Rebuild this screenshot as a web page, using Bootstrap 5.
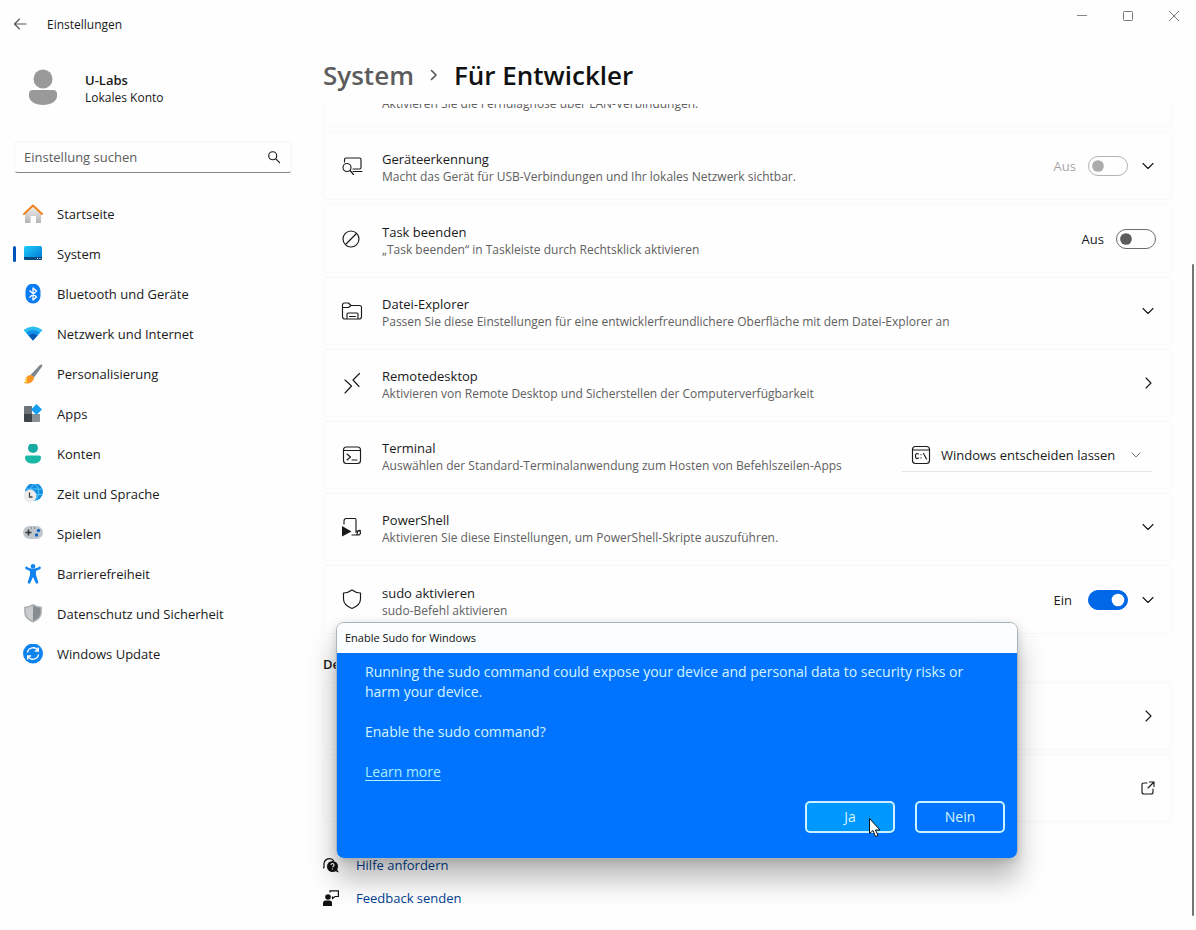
<!DOCTYPE html>
<html lang="de">
<head>
<meta charset="utf-8">
<meta name="viewport" content="width=device-width, initial-scale=1">
<title>Einstellungen</title>
<link href="https://cdn.jsdelivr.net/npm/bootstrap@5.3.0/dist/css/bootstrap.min.css" rel="stylesheet">
<style>
  body { font-family: "Open Sans", "Noto Sans", sans-serif; font-size: 13px; line-height: 20px; color: #1a1a1a; background: #fefefe; }
  svg { display: block; flex: none; }
  .line { fill: none; stroke: #1a1a1a; stroke-width: 1.15; stroke-linejoin: round; stroke-linecap: round; }
  .window { min-height: 100vh; }
  .titlebar { height: 48px; padding-left: 13px; }
  .titlebar button, .row-action { background: none; border: 0; padding: 0; color: inherit; }
  .app-name { font-size: 12px; padding: 2px 0 0 2px; }
  .caption-buttons { gap: 36px; padding: 0 17px 16px 0; }
  .sidebar { width: 306px; padding: 0 14px; }
  .account { height: 76px; margin-top: 2px; padding-left: 14px; gap: 26px; }
  .account-text { line-height: 18px; font-size: 12px; padding-top: 2px; }
  .account-name { font-size: 13px; }
  .search { margin-top: 15px; height: 32px; padding: 0 10px 0 9px; border: 1px solid #f6f6f6; border-bottom-color: #868686; border-radius: 4px; }
  .search input { border: 0; outline: 0; background: none; min-width: 0; padding: 0; }
  .search input::placeholder { color: #5c5c5c; opacity: 1; }
  .side-list { margin-top: 23px; gap: 4px; }
  .side-list a { height: 36px; padding: 0 9px; gap: 14px; color: #1a1a1a; text-decoration: none; border-radius: 4px; }
  .side-list a.active::before { content: ""; width: 3px; height: 16px; margin: 0 -4px 0 -10px; border-radius: 2px; background: #0052b8; }
  .side-list a.active { gap: 11px; }
  .side-list a.active svg { margin-right: 3px; }
  .content { padding: 0 24px 16px 17px; }
  .crumbs { height: 56px; gap: 15px; padding-bottom: 2px; font-size: 26px; line-height: 36px; font-weight: 600; margin: 0; color: #111; }
  .crumbs a { color: #5c5c5c; text-decoration: none; }
  .settings { gap: 4px; }
  .setting { min-height: 68px; padding: 0 15px 0 16px; border: 1px solid #f8f8f8; border-radius: 4px; background: #fefefe; }
  .setting.has-switch { min-height: 69px; }
  .setting.scrolled { min-height: 0; height: 23px; overflow: hidden; border-top: 0; padding: 0 16px 14px 58px; }
  .setting > svg { margin-right: 18px; }
  .setting-text { padding-top: 3px; }
  .setting-title { line-height: 18px; }
  .setting-note { font-size: 12px; line-height: 17px; color: #606060; }
  .row-action { margin: 0 1px 0 13px; }
  .toggle { gap: 12px; }
  .toggle .form-check-input { width: 40px; height: 20px; margin: 0; border-color: #6b6b6b; box-shadow: none; background-color: transparent;
    background-image: url("data:image/svg+xml,%3Csvg xmlns='http://www.w3.org/2000/svg' viewBox='0 0 20 20'%3E%3Ccircle cx='10' cy='10' r='6.5' fill='%235c5c5c'/%3E%3C/svg%3E"); }
  .toggle .form-check-input:checked { background-color: #0067e6; border-color: #0067e6;
    background-image: url("data:image/svg+xml,%3Csvg xmlns='http://www.w3.org/2000/svg' viewBox='0 0 20 20'%3E%3Ccircle cx='10' cy='10' r='7' fill='white'/%3E%3C/svg%3E"); }
  .terminal-pick { width: 250px; height: 34px; display: grid; grid-template-columns: 38px 1fr 32px; align-items: center; border-bottom: 1px solid #e4e4e4; margin-right: 4px; }
  .terminal-pick select { grid-area: 1 / 1 / 2 / 4; width: 100%; height: 32px; border: 0; background: none; appearance: none; padding: 0 30px 0 39px; color: #1a1a1a; }
  .terminal-pick svg { grid-row: 1; justify-self: center; pointer-events: none; }
  .pick-icon { grid-column: 1; }
  .pick-arrow { grid-column: 3; }
  .group-title { font-size: 13px; font-weight: 600; line-height: 20px; margin: 20px 0 8px; }
  .help-links { gap: 13px; margin-top: 33px; }
  .help-links a { gap: 17px; color: #003e92; text-decoration: none; }
  .scroll-thumb { position: absolute; top: 264px; bottom: 14px; right: 2px; width: 2px; border-radius: 1px; background: #757575; }
  .sudo-dialog { position: absolute; left: 336px; top: 622px; width: 682px; border: 1px solid #a9b3ba; border-radius: 8px; overflow: hidden; box-shadow: 0 20px 28px rgba(0,0,0,.28), 0 2px 8px rgba(0,0,0,.14); }
  .sudo-title { height: 30px; line-height: 30px; padding-left: 8px; font-size: 11px; font-weight: 400; margin: 0; background: #fafefe; color: #111; }
  .sudo-body { background: #0074ff; color: #d5f5ff; font-size: 14px; padding: 9px 12px 25px 28px; }
  .sudo-body p { margin: 0 28px 20px 0; }
  .sudo-body a { color: #a9eeff; text-underline-offset: 3px; }
  .sudo-buttons { gap: 20px; margin-top: 19px; }
  .sudo-buttons .btn { width: 90px; height: 32px; padding: 0; border: 2px solid #c8f2ff; border-radius: 5px; color: #d5f5ff; font-size: 14px; line-height: 20px; }
  .sudo-buttons .hovered { background: #0097ff; }
  .pointer { position: absolute; left: 868px; top: 817px; z-index: 5; }
</style>
</head>
<body>
<div class="window position-relative d-flex flex-column">
  <header class="titlebar d-flex align-items-center justify-content-between">
    <div class="d-flex align-items-center gap-3">
      <button type="button" aria-label="Zurück"><svg width="16" height="16" viewBox="0 0 16 16"><path class="line" style="stroke:#555" d="M13 8H1.500M6.500 3 1.500 8l5 5"/></svg></button>
      <span class="app-name">Einstellungen</span>
    </div>
    <div class="caption-buttons d-flex align-items-center">
      <button type="button" aria-label="Minimieren"><svg width="10" height="10" viewBox="0 0 10 10"><path d="M0 4.500h10" stroke="#888" fill="none"/></svg></button>
      <button type="button" aria-label="Maximieren"><svg width="10" height="10" viewBox="0 0 10 10"><rect x=".5" y=".5" width="9" height="9" rx="1" stroke="#777" fill="none"/></svg></button>
      <button type="button" aria-label="Schließen"><svg width="10" height="10" viewBox="0 0 10 10"><path d="m0 0 10 10M10 0 0 10" stroke="#777" fill="none"/></svg></button>
    </div>
  </header>

  <div class="d-flex flex-grow-1">
    <aside class="sidebar flex-shrink-0">
      <div class="account d-flex align-items-center">
        <svg width="31" height="38" viewBox="0 0 31 38"><g fill="#999"><circle cx="15" cy="10" r="9.500"/><path d="M1 25q0-4 4-4h20q4 0 4 4v2c0 5-6 9-14 9S1 32 1 27z"/></g></svg>
        <div class="account-text"><div class="account-name fw-semibold">U-Labs</div><div>Lokales Konto</div></div>
      </div>
      <div class="search d-flex align-items-center">
        <input class="flex-grow-1" type="text" placeholder="Einstellung suchen" aria-label="Einstellung suchen">
        <svg width="14" height="14" viewBox="0 0 14 14"><path class="line" d="M9.700 5.700a4 4 0 1 1-8 0 4 4 0 0 1 8 0zM8.600 8.600 12.600 12.600"/></svg>
      </div>
      <nav class="side-list d-flex flex-column" aria-label="Einstellungen">
        <a href="#" class="d-flex align-items-center">
          <svg width="20" height="20" viewBox="0 0 20 20"><defs><linearGradient id="gh" x2="0" y2="1"><stop stop-color="#f3f3f3"/><stop offset="1" stop-color="#b4b4b4"/></linearGradient></defs><path fill="url(#gh)" d="M2 9 10 2l8 7v9.500q0 .5-.5.5H13v-7H7.500v7H2.500q-.5 0-.5-.5z"/><path d="m1 10 9-8.500 9 8.500" fill="none" stroke="#f1841b" stroke-width="2" stroke-linejoin="round" stroke-linecap="round"/></svg>Startseite</a>
        <a href="#" class="active d-flex align-items-center" aria-current="page">
          <svg width="20" height="20" viewBox="0 0 20 20"><defs><linearGradient id="gs" x2="1" y2="1"><stop stop-color="#1fd0fa"/><stop offset="1" stop-color="#0071d4"/></linearGradient></defs><rect x="1" y="2" width="18" height="14" rx="1.500" fill="url(#gs)"/><path fill="#0b4a7c" d="M1 13h18v1.500q0 1.500-1.500 1.500h-15Q1 16 1 14.500z"/><path stroke="#fff" d="M14 14.500h1M16.500 14.500h1"/></svg>System</a>
        <a href="#" class="d-flex align-items-center">
          <svg width="20" height="20" viewBox="0 0 20 20"><rect x="2.500" y="-.5" width="15" height="20" rx="7.500" fill="#0a7cf5"/><path d="m6.500 6.500 7 6.500-3.500 3V4l3.500 3-7 6.500" fill="none" stroke="#fff" stroke-width="1.300" stroke-linejoin="round"/></svg>Bluetooth und Geräte</a>
        <a href="#" class="d-flex align-items-center">
          <svg width="20" height="20" viewBox="0 0 20 20"><path fill="#29bdf2" d="M.5 6Q10-1 19.500 6L10 16.500z"/><path fill="#0f91ea" d="M3 8.500q7-5 14 0l-7 8z"/><path fill="#0559b7" d="M5.500 11.500q4.500-3.500 9 0l-4.500 5z"/></svg>Netzwerk und Internet</a>
        <a href="#" class="d-flex align-items-center">
          <svg width="20" height="20" viewBox="0 0 20 20"><path fill="#7d868d" d="M18.500.5q1.500 0 .5 2L11 13.500 7.500 11 16.500 1.500q1-1 2-1z"/><path fill="#f7931e" d="M7.500 11q3.500.5 3.500 3.500c-1 4-6 6-10 4.500 2-1 1-3 2-5.500q1.500-2.500 4.500-2.500z"/><path fill="#ffd04a" d="M5 13q-2 3 0 5-2 .8-4 .5c2-1 1-3 2-4.500z"/></svg>Personalisierung</a>
        <a href="#" class="d-flex align-items-center">
          <svg width="20" height="20" viewBox="0 0 20 20"><path fill="#6d7479" d="M1 3q0-1 1-1h7v8H1z"/><path fill="#3e454a" d="M1 10h8v8H2q-1 0-1-1z"/><path fill="#899197" d="M9 10h8v7q0 1-1 1H9z"/><path fill="#159ef3" d="M13.500 0 19 5.500 13.500 11 8 5.500z"/></svg>Apps</a>
        <a href="#" class="d-flex align-items-center">
          <svg width="20" height="20" viewBox="0 0 20 20"><circle cx="10" cy="4" r="5" fill="#16aaa0"/><path fill="#19b8a6" d="M2 13.500q0-2 2-2h12q2 0 2 2c0 4-3.500 6-8 6s-8-2-8-6z"/></svg>Konten</a>
        <a href="#" class="d-flex align-items-center">
          <svg width="20" height="20" viewBox="0 0 20 20"><circle cx="11" cy="8" r="9" fill="#148fe0"/><path d="M3 5h16M3 10.500h16M11 0c-5 5-5 11 0 17M12 0c5 5 5 11 0 17" fill="none" stroke="#5fd0ff" stroke-width=".8"/><circle cx="7" cy="12" r="6.500" fill="#ececec"/><path d="M6.500 8.500v4.500h3" fill="none" stroke="#444" stroke-width="1.300"/></svg>Zeit und Sprache</a>
        <a href="#" class="d-flex align-items-center">
          <svg width="20" height="20" viewBox="0 0 20 20"><rect y="2" width="20" height="13" rx="6.500" fill="#bfc5cc"/><path d="M5.500 5.500v6M2.500 8.500h6" stroke="#333" stroke-width="1.500"/><g fill="#1766bd"><circle cx="15.500" cy="6.500" r="1.700"/><circle cx="13.500" cy="11" r="1.700"/></g><path stroke="#555" d="M8 4h1M11 4h1"/></svg>Spielen</a>
        <a href="#" class="d-flex align-items-center">
          <svg width="20" height="20" viewBox="0 0 20 20"><g fill="#1284f2"><circle cx="10" cy="2.300" r="2.300"/><path d="M2.300 3.300c.4-.8 1.200-.9 2-.4 3.500 2 7.900 2 11.400 0 .8-.5 1.600-.4 2 .4.3.8 0 1.500-.8 2L13 7v4l2.300 7c.2 1.600-2 2.300-2.700.8L10 13l-2.600 5.800c-.7 1.500-2.900.8-2.700-.8L7 11V7L3.100 5.300c-.8-.5-1.100-1.200-.8-2z"/></g></svg>Barrierefreiheit</a>
        <a href="#" class="d-flex align-items-center">
          <svg width="20" height="20" viewBox="0 0 20 20"><path fill="#a9adb0" d="M10 0q4 2.700 8.800 2.700v5.500c0 5-4 8.500-8.800 10.200C5.200 16.700 1.200 13.200 1.200 8.200V2.700Q6 2.700 10 0z"/><path fill="#868c90" d="M10 1.700q3.500 2 7.300 2.300v4.200c0 4-3.300 7-7.300 8.500z"/><path fill="#c9cccd" d="M10 1.700Q6.500 3.700 2.700 4v4.200c0 4 3.300 7 7.300 8.500z"/></svg>Datenschutz und Sicherheit</a>
        <a href="#" class="d-flex align-items-center">
          <svg width="20" height="20" viewBox="0 0 20 20"><circle cx="10" cy="9.500" r="10" fill="#0c83ee"/><path d="M4.500 8.500A5.700 5.700 0 0 1 15 6.500M15.500 10.500A5.700 5.700 0 0 1 5 12.500M15.300 3.500V7h-3.500M4.700 15.500V12h3.500" fill="none" stroke="#fff" stroke-width="1.400"/></svg>Windows Update</a>
      </nav>
    </aside>

    <main class="content flex-grow-1">
      <h1 class="crumbs d-flex align-items-center">
        <a href="#">System</a>
        <svg width="10" height="14" viewBox="0 0 10 14"><path class="line" style="stroke:#555;stroke-width:1.600" d="m2.500 2.500 4.500 4.500-4.500 4.500"/></svg>
        <span>Für Entwickler</span>
      </h1>
      <div class="settings d-flex flex-column">
        <section class="setting scrolled d-flex align-items-end"><div class="setting-note">Aktivieren Sie die Ferndiagnose über LAN-Verbindungen.</div></section>

        <section class="setting has-switch d-flex align-items-center">
          <svg width="24" height="24" viewBox="0 0 24 24"><path class="line" d="M4.500 8V5.500q0-1.500 1.500-1.500h13.500q1.500 0 1.500 1.500v8q0 1.500-1.500 1.500H13M13 17.500h9M11 13.500a4 4 0 1 1-8 0 4 4 0 0 1 8 0zM10 16.500l3.500 4"/></svg>
          <div class="setting-text flex-grow-1"><div class="setting-title">Geräteerkennung</div><div class="setting-note">Macht das Gerät für USB-Verbindungen und Ihr lokales Netzwerk sichtbar.</div></div>
          <div class="toggle form-switch d-flex align-items-center p-0"><label for="sw1" class="text-black-50 opacity-75">Aus</label><input id="sw1" class="form-check-input" type="checkbox" role="switch" disabled></div>
          <button type="button" class="row-action" aria-label="Geräteerkennung erweitern"><svg width="14" height="14" viewBox="0 0 14 14"><path class="line" d="m2 4.500 5 5 5-5"/></svg></button>
        </section>

        <section class="setting has-switch d-flex align-items-center">
          <svg width="24" height="24" viewBox="0 0 24 24"><circle class="line" cx="11" cy="12" r="8"/><path class="line" d="m6 17 10.500-10.500"/></svg>
          <div class="setting-text flex-grow-1"><div class="setting-title">Task beenden</div><div class="setting-note">„Task beenden“ in Taskleiste durch Rechtsklick aktivieren</div></div>
          <div class="toggle form-switch d-flex align-items-center p-0"><label for="sw2">Aus</label><input id="sw2" class="form-check-input" type="checkbox" role="switch"></div>
        </section>

        <section class="setting d-flex align-items-center">
          <svg width="24" height="24" viewBox="0 0 24 24"><path class="line" d="M7 20H5q-2.500 0-2.500-2.500V6Q2.500 4 4.500 4h4l2.500 2.500h8.500q2 0 2 2v9Q21.500 20 19 20M2.500 8.500h6l2.500-2M7 20v-5q0-1 1-1h9q1 0 1 1v5zM9.500 17.500h6"/></svg>
          <div class="setting-text flex-grow-1"><div class="setting-title">Datei-Explorer</div><div class="setting-note">Passen Sie diese Einstellungen für eine entwicklerfreundlichere Oberfläche mit dem Datei-Explorer an</div></div>
          <button type="button" class="row-action" aria-label="Datei-Explorer erweitern"><svg width="14" height="14" viewBox="0 0 14 14"><path class="line" d="m2 4.500 5 5 5-5"/></svg></button>
        </section>

        <section class="setting d-flex align-items-center">
          <svg width="24" height="24" viewBox="0 0 24 24"><path class="line" d="m5 9 6.500 6L5 22M19.500 2.500 13 9l6 6.500"/></svg>
          <div class="setting-text flex-grow-1"><div class="setting-title">Remotedesktop</div><div class="setting-note">Aktivieren von Remote Desktop und Sicherstellen der Computerverfügbarkeit</div></div>
          <button type="button" class="row-action" aria-label="Remotedesktop öffnen"><svg width="14" height="14" viewBox="0 0 14 14"><path class="line" d="m5 2 5 5-5 5"/></svg></button>
        </section>

        <section class="setting d-flex align-items-center">
          <svg width="24" height="24" viewBox="0 0 24 24"><rect class="line" x="3.500" y="4" width="17" height="16.500" rx="3"/><path class="line" d="M3.500 7.500h17M7 11l3.500 3L7 17M12 17h5"/></svg>
          <div class="setting-text flex-grow-1"><div class="setting-title">Terminal</div><div class="setting-note">Auswählen der Standard-Terminalanwendung zum Hosten von Befehlszeilen-Apps</div></div>
          <div class="terminal-pick">
            <select aria-label="Standard-Terminalanwendung"><option>Windows entscheiden lassen</option></select>
            <svg class="pick-icon" width="20" height="20" viewBox="0 0 20 20"><rect class="line" x="1.500" y="1.500" width="17" height="17" rx="3"/><path class="line" d="M1.500 5h17M7.500 9q-3-1.500-3 2t3 2M10 9.500v.2M10 12.800v.2M12.500 8.500l3 5.500"/></svg>
            <svg class="pick-arrow" width="12" height="12" viewBox="0 0 12 12"><path class="line" style="stroke:#777;stroke-width:1" d="m2 4 4 4 4-4"/></svg>
          </div>
        </section>

        <section class="setting d-flex align-items-center">
          <svg width="24" height="24" viewBox="0 0 24 24"><path class="line" d="M4 9V6q0-2.500 2.500-2.500H15q1 0 1 1.500v12.500M16 16h3q1.500 0 1.500 1.500 0 2.500-2.500 2.500h-6M20.500 15.500q-3-.5-3 2 0 2-1.500 2.500"/><path fill="#1a1a1a" d="M2 11v10.500l9.500-5z"/></svg>
          <div class="setting-text flex-grow-1"><div class="setting-title">PowerShell</div><div class="setting-note">Aktivieren Sie diese Einstellungen, um PowerShell-Skripte auszuführen.</div></div>
          <button type="button" class="row-action" aria-label="PowerShell erweitern"><svg width="14" height="14" viewBox="0 0 14 14"><path class="line" d="m2 4.500 5 5 5-5"/></svg></button>
        </section>

        <section class="setting has-switch d-flex align-items-center">
          <svg width="24" height="24" viewBox="0 0 24 24"><path class="line" d="M12 2q4 3 8.500 3v6c0 4.500-3.500 7.500-8.500 9.500-5-2-8.500-5-8.500-9.500V5Q8 5 12 2z"/></svg>
          <div class="setting-text flex-grow-1"><div class="setting-title">sudo aktivieren</div><div class="setting-note">sudo-Befehl aktivieren</div></div>
          <div class="toggle form-switch d-flex align-items-center p-0"><label for="sw3" class="pe-1">Ein</label><input id="sw3" class="form-check-input" type="checkbox" role="switch" checked></div>
          <button type="button" class="row-action" aria-label="sudo aktivieren erweitern"><svg width="14" height="14" viewBox="0 0 14 14"><path class="line" d="m2 4.500 5 5 5-5"/></svg></button>
        </section>
      </div>

      <h2 class="group-title">De</h2>
      <div class="settings d-flex flex-column">
        <section class="setting d-flex align-items-center justify-content-end">
          <button type="button" class="row-action" aria-label="Öffnen"><svg width="14" height="14" viewBox="0 0 14 14"><path class="line" d="m5 2 5 5-5 5"/></svg></button>
        </section>
        <section class="setting d-flex align-items-center justify-content-end">
          <button type="button" class="row-action" aria-label="Im Browser öffnen"><svg width="14" height="14" viewBox="0 0 14 14"><path class="line" d="M6 2H3Q1 2 1 4v7q0 2 2 2h7q2 0 2-2V8M8.500 1H13v4.500M13 1 7 7"/></svg></button>
        </section>
      </div>

      <div class="help-links d-flex flex-column align-items-start">
        <a href="#" class="d-flex align-items-center"><svg width="16" height="16" viewBox="0 0 16 16"><path d="M1 11V7a5.500 5.500 0 0 1 10-3M1 11H0" fill="none" stroke="#111" stroke-width="1.200"/><circle cx="9.500" cy="9.500" r="5.500" fill="#111"/><path fill="#111" d="m12 14 4 1.500-2.500-4z"/><path d="M8 8q0-1.500 1.500-1.500T11 8q0 1-1.500 2M9.500 11.500v1" fill="none" stroke="#fff" stroke-width="1.200"/></svg>Hilfe anfordern</a>
        <a href="#" class="d-flex align-items-center"><svg width="16" height="16" viewBox="0 0 16 16"><circle cx="5" cy="7" r="2.800" fill="#111"/><path fill="#111" d="M0 16v-3q0-2.500 2.500-2.500h4Q9 10.500 9 13v3z"/><path d="M7 2.500V.8h8.400v5.700H12L9.500 8.500v-2" fill="none" stroke="#111" stroke-width="1.200"/></svg>Feedback senden</a>
      </div>
    </main>
  </div>

  <div class="scroll-thumb"></div>

  <div class="sudo-dialog" role="dialog" aria-labelledby="sudo-title">
    <h2 class="sudo-title" id="sudo-title">Enable Sudo for Windows</h2>
    <div class="sudo-body">
      <p>Running the sudo command could expose your device and personal data to security risks or harm your device.</p>
      <p>Enable the sudo command?</p>
      <a href="#">Learn more</a>
      <div class="sudo-buttons d-flex justify-content-end">
        <button type="button" class="btn hovered">Ja</button>
        <button type="button" class="btn">Nein</button>
      </div>
    </div>
  </div>
  <svg class="pointer" width="14" height="21" viewBox="0 0 14 21"><path d="M1.500 1.500v15l3.500-3 2.500 6 2.500-1-2.500-5.500h4.500z" fill="#fff" stroke="#111"/></svg>
</div>
<script src="https://cdn.jsdelivr.net/npm/bootstrap@5.3.0/dist/js/bootstrap.bundle.min.js"></script>
</body>
</html>
